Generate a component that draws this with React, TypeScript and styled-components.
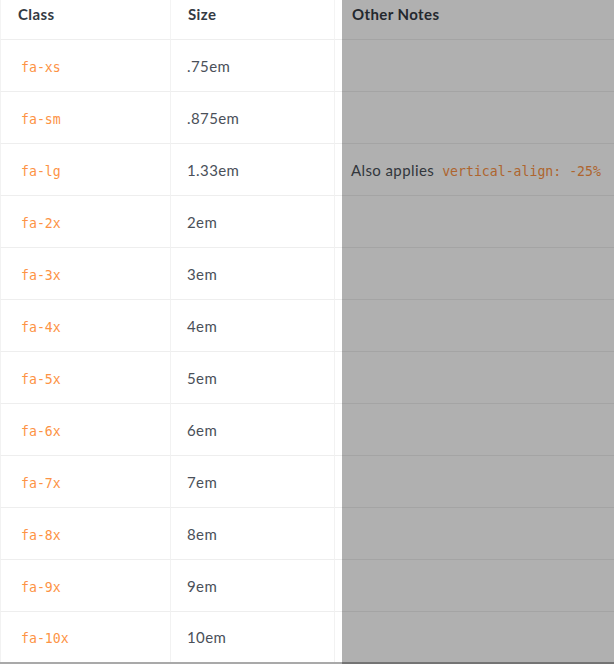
import styled, { createGlobalStyle } from "styled-components";

const GlobalStyle = createGlobalStyle`
  html, body {
    margin: 0;
    padding: 0;
    background: #ffffff;
    overflow: hidden;
  }
`;

const Wrapper = styled.div`
  position: relative;
  width: 614px;
  height: 664px;
  overflow: hidden;
  font-family: Lato, "Open Sans", sans-serif;
`;

const Table = styled.div`
  display: grid;
  grid-template-columns: 170px 164px 320px;
  border-bottom: 2px solid #a9a9a9;
`;

const HeadCell = styled.div`
  height: 40px;
  box-sizing: border-box;
  padding: 5px 16px 0 17px;
  border-bottom: 1px solid #eeeeee;
  border-left: 1px solid #f4f4f4;
  font-size: 15px;
  letter-spacing: 0.4px;
  font-weight: 700;
  color: #343a43;
`;

const Cell = styled.div<{ $last?: boolean }>`
  height: ${(p) => (p.$last ? "50px" : "52px")};
  box-sizing: border-box;
  display: flex;
  align-items: center;
  padding: 0 16px;
  border-bottom: ${(p) => (p.$last ? "none" : "1px solid #eeeeee")};
  border-left: 1px solid #f2f2f2;
  font-size: 15px;
  letter-spacing: 0.4px;
  color: #4a5059;
  white-space: nowrap;
`;

const Code = styled.code<{ $lead?: boolean }>`
  font-family: "DejaVu Sans Mono", "Liberation Mono", monospace;
  font-size: 13.2px;
  letter-spacing: 0;
  color: #fd9345;
  padding: 3px 4px 0;
  margin-left: ${(p) => (p.$lead ? "0" : "4px")};
`;

const Shade = styled.div`
  position: absolute;
  top: 0;
  bottom: 0;
  left: 342px;
  right: 0;
  background: rgba(0, 0, 0, 0.31);
`;

interface ISizeRow {
  cls: string;
  size: string;
  note?: string;
}

const rows: ISizeRow[] = [
  { cls: "fa-xs", size: ".75em" },
  { cls: "fa-sm", size: ".875em" },
  { cls: "fa-lg", size: "1.33em", note: "vertical-align: -25%" },
  { cls: "fa-2x", size: "2em" },
  { cls: "fa-3x", size: "3em" },
  { cls: "fa-4x", size: "4em" },
  { cls: "fa-5x", size: "5em" },
  { cls: "fa-6x", size: "6em" },
  { cls: "fa-7x", size: "7em" },
  { cls: "fa-8x", size: "8em" },
  { cls: "fa-9x", size: "9em" },
  { cls: "fa-10x", size: "10em" },
];

function App() {
  return (
    <Wrapper>
      <GlobalStyle />
      <Table>
        <HeadCell>Class</HeadCell>
        <HeadCell>Size</HeadCell>
        <HeadCell>Other Notes</HeadCell>
        {rows.map((row, i) => {
          const last = i === rows.length - 1;
          return [
            <Cell key={row.cls + "-c"} $last={last}>
              <Code $lead>{row.cls}</Code>
            </Cell>,
            <Cell key={row.cls + "-s"} $last={last}>
              {row.size}
            </Cell>,
            <Cell key={row.cls + "-n"} $last={last}>
              {row.note && (
                <>
                  Also applies<Code>{row.note}</Code>
                </>
              )}
            </Cell>,
          ];
        })}
      </Table>
      <Shade />
    </Wrapper>
  );
}

export default App;
